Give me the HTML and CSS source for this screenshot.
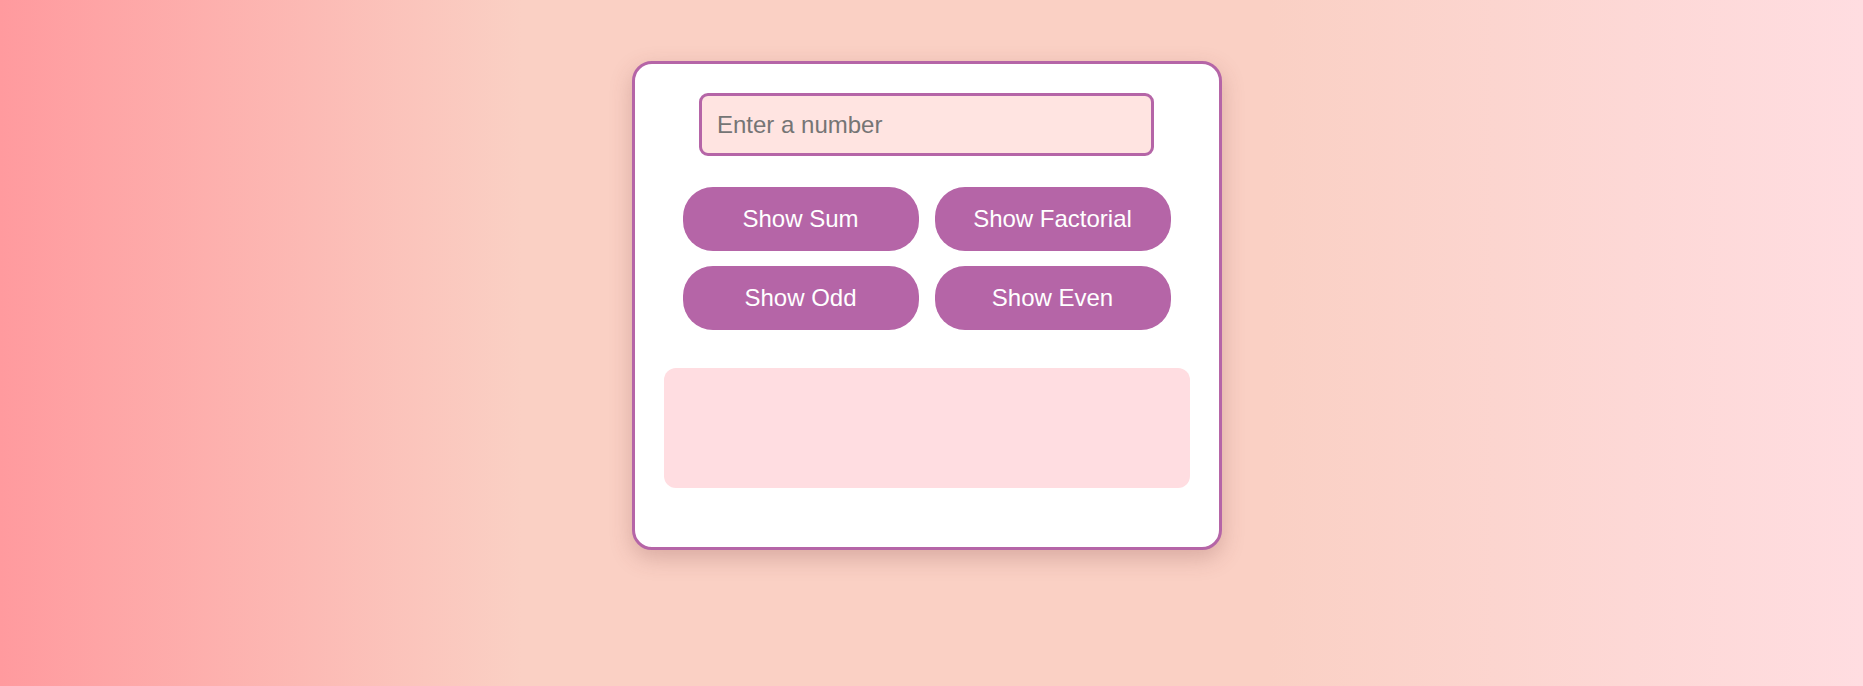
FILE: index.html
```html
<!DOCTYPE html>
<html lang="en">
<head>
<meta charset="utf-8">
<title>Number Tools</title>
<link rel="stylesheet" href="styles.css">
</head>
<body>
<main class="page">
  <section class="card">
    <input class="number-input" type="number" placeholder="Enter a number">
    <div class="actions">
      <button class="btn" type="button">Show Sum</button>
      <button class="btn" type="button">Show Factorial</button>
      <button class="btn" type="button">Show Odd</button>
      <button class="btn" type="button">Show Even</button>
    </div>
    <div class="result"></div>
  </section>
</main>
</body>
</html>
```
FILE: styles.css
```css
* { box-sizing: border-box; }

html, body {
  margin: 0;
  height: 100%;
}

body {
  font-family: "Liberation Sans", Arial, sans-serif;
  background: linear-gradient(to right, #ff9a9e 0%, #fad0c4 28%, #fad0c4 68%, #ffdde1 100%);
}

.page {
  display: flex;
  justify-content: center;
  align-items: flex-start;
  padding: 61px 10px 0 0;
  min-height: 100%;
}

.card {
  width: 590px;
  background: #ffffff;
  border: 3px solid #b565a7;
  border-radius: 20px;
  padding: 29px;
  box-shadow: 0 8px 22px rgba(120, 60, 60, 0.25);
  display: flex;
  flex-direction: column;
  align-items: center;
}

.number-input {
  width: 455px;
  height: 63px;
  padding: 0 15px;
  border: 3px solid #b565a7;
  border-radius: 9px;
  background: #ffe4e1;
  font-family: inherit;
  font-size: 24px;
  color: #333;
  outline: none;
  -moz-appearance: textfield;
}

.number-input::placeholder { color: #757575; }

.number-input::-webkit-outer-spin-button,
.number-input::-webkit-inner-spin-button {
  -webkit-appearance: none;
  margin: 0;
}

.actions {
  margin-top: 31px;
  display: grid;
  grid-template-columns: repeat(2, 236px);
  gap: 15px 16px;
  justify-content: center;
}

.btn {
  height: 64px;
  border: none;
  border-radius: 30px;
  background: #b565a7;
  color: #ffffff;
  font-family: inherit;
  font-size: 24px;
  cursor: pointer;
}

.result {
  align-self: stretch;
  margin: 38px 0 30px;
  height: 120px;
  background: #ffdde1;
  border-radius: 12px;
}
```
